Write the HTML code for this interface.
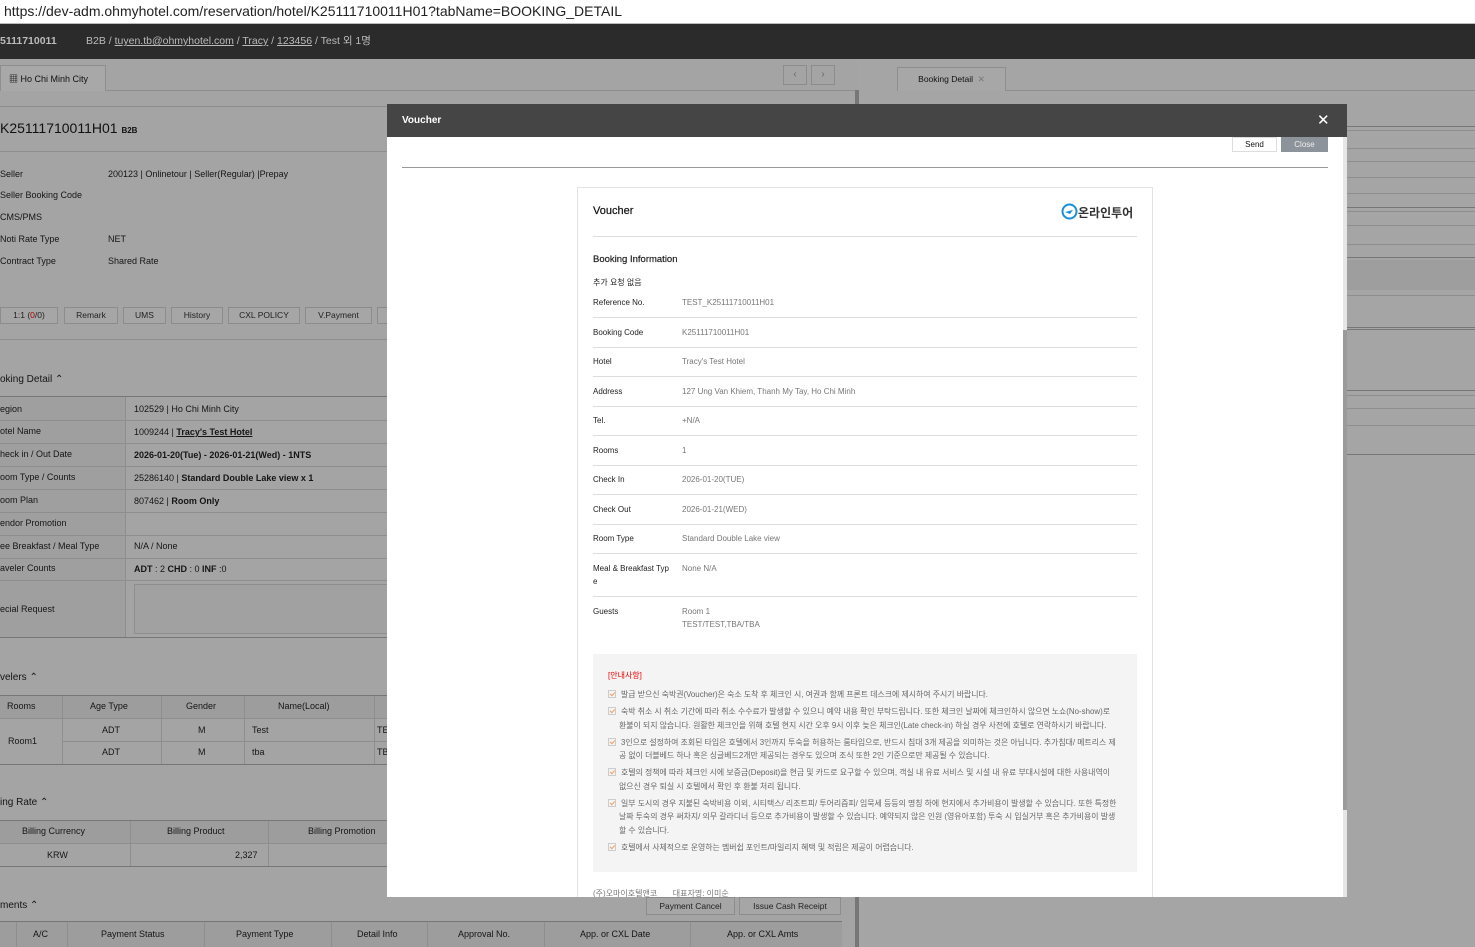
<!DOCTYPE html>
<html><head><meta charset="utf-8"><style>
*{margin:0;padding:0;box-sizing:border-box}
body{width:1475px;height:947px;overflow:hidden;background:#a5a5a5;font-family:"Liberation Sans","Noto Sans CJK KR",sans-serif;position:relative;color:#111}
.a{position:absolute}
.url{left:0;top:0;width:1475px;height:24px;background:#fff;border-bottom:1px solid #bbb;font-size:14px;color:#222;padding:1px 4px;line-height:20px}
.top{left:0;top:24px;width:1475px;height:35px;background:#2b2b2b;color:#bbb;font-size:10.5px;line-height:35px}
.top u{color:#bbb}
.t{font-size:9px;color:#151515;white-space:nowrap}
.hl{height:1px;background:#777}
.hl2{height:1px;background:#8e8e8e}
.btn{border:1px solid #8c8c8c;height:17px;font-size:8.5px;line-height:15px;text-align:center;color:#222;background:#a6a6a6}
.vl{width:1px;background:#8e8e8e}
.cell{font-size:9px;color:#151515;position:absolute;white-space:nowrap}
.m{left:387px;top:104px;width:960px;height:793px;background:#fff;overflow:hidden}
.v{font-size:8px;color:#222;white-space:nowrap}
.vv{font-size:8px;color:#777;white-space:nowrap}
.rl{height:1px;background:#ddd;left:593px;width:544px}
.n{font-size:7.9px;color:#666;line-height:13.6px;white-space:nowrap;margin-bottom:3.4px}
.ck{display:inline-block;width:8px;height:8px;border:1px solid #ccc;margin-right:5px;position:relative;top:1px}
.ck:after{content:"";position:absolute;left:2px;top:0px;width:2px;height:4px;border:solid #f0a060;border-width:0 1px 1px 0;transform:rotate(45deg)}
</style></head><body>
<div class="a url">https://dev-adm.ohmyhotel.com/reservation/hotel/K25111710011H01?tabName=BOOKING_DETAIL</div>
<div class="a top"><span class="a" style="left:0;font-weight:bold;color:#bbb">5111710011</span><span class="a" style="left:86px">B2B / <u>tuyen.tb@ohmyhotel.com</u> / <u>Tracy</u> / <u>123456</u> / Test 외 1명</span></div>

<div class="a" style="left:0;top:59px;width:858px;height:888px;background:#a4a4a4"></div>
<div class="a" style="left:0;top:65px;width:106px;height:26px;border:1px solid #8e8e8e;border-bottom:none;background:#a8a8a8;font-size:9px;line-height:26px;padding-left:8px">▦ Ho Chi Minh City</div>
<div class="a hl2" style="left:106px;top:90px;width:752px"></div>
<div class="a" style="left:783px;top:65px;width:24px;height:20px;border:1px solid #8c8c8c;font-size:10px;text-align:center;line-height:18px;color:#666">‹</div>
<div class="a" style="left:811px;top:65px;width:24px;height:20px;border:1px solid #8c8c8c;font-size:10px;text-align:center;line-height:18px;color:#666">›</div>
<div class="a" style="left:855px;top:90px;width:4px;height:857px;background:#777"></div>
<div class="a hl2" style="left:0;top:106px;width:858px"></div>
<div class="a" style="left:0;top:120px;font-size:14px;color:#111">K25111710011H01 <span style="font-size:8px;font-weight:bold">B2B</span></div>
<div class="a hl2" style="left:0;top:151px;width:858px"></div>
<div class="a t" style="left:0;top:169px">Seller</div><div class="a t" style="left:108px;top:169px">200123 | Onlinetour | Seller(Regular) |Prepay</div>
<div class="a t" style="left:0;top:190px">Seller Booking Code</div>
<div class="a t" style="left:0;top:212px">CMS/PMS</div>
<div class="a t" style="left:0;top:234px">Noti Rate Type</div><div class="a t" style="left:108px;top:234px">NET</div>
<div class="a t" style="left:0;top:256px">Contract Type</div><div class="a t" style="left:108px;top:256px">Shared Rate</div>
<div class="a btn" style="left:0;top:307px;width:58px">1:1 (<span style="color:#a00">0</span>/0)</div>
<div class="a btn" style="left:64px;top:307px;width:54px">Remark</div>
<div class="a btn" style="left:123px;top:307px;width:43px">UMS</div>
<div class="a btn" style="left:171px;top:307px;width:52px">History</div>
<div class="a btn" style="left:228px;top:307px;width:72px">CXL POLICY</div>
<div class="a btn" style="left:305px;top:307px;width:67px">V.Payment</div>
<div class="a btn" style="left:377px;top:307px;width:20px"></div>
<div class="a hl2" style="left:0;top:339px;width:858px"></div>
<div class="a t" style="left:0;top:374px;font-size:10px">oking Detail ⌃</div>
<div class="a hl" style="left:0;top:396px;width:858px"></div>
<div class="a" style="left:0;top:397px;width:125px;height:240px;background:#9f9f9f"></div>
<div class="a vl" style="left:125px;top:397px;height:240px"></div>
<div class="a t" style="left:0;top:404px">egion</div><div class="a t" style="left:134px;top:404px">102529 | Ho Chi Minh City</div>
<div class="a hl2" style="left:0;top:420px;width:858px"></div>
<div class="a t" style="left:0;top:426px">otel Name</div><div class="a t" style="left:134px;top:427px">1009244 | <b><u>Tracy's Test Hotel</u></b></div>
<div class="a hl2" style="left:0;top:443px;width:858px"></div>
<div class="a t" style="left:0;top:449px">heck in / Out Date</div><div class="a t" style="left:134px;top:450px"><b>2026-01-20(Tue) - 2026-01-21(Wed) - 1NTS</b></div>
<div class="a hl2" style="left:0;top:466px;width:858px"></div>
<div class="a t" style="left:0;top:472px">oom Type / Counts</div><div class="a t" style="left:134px;top:473px">25286140 | <b>Standard Double Lake view x 1</b></div>
<div class="a hl2" style="left:0;top:489px;width:858px"></div>
<div class="a t" style="left:0;top:495px">oom Plan</div><div class="a t" style="left:134px;top:496px">807462 | <b>Room Only</b></div>
<div class="a hl2" style="left:0;top:512px;width:858px"></div>
<div class="a t" style="left:0;top:518px">endor Promotion</div>
<div class="a hl2" style="left:0;top:535px;width:858px"></div>
<div class="a t" style="left:0;top:541px">ee Breakfast / Meal Type</div><div class="a t" style="left:134px;top:541px">N/A / None</div>
<div class="a hl2" style="left:0;top:558px;width:858px"></div>
<div class="a t" style="left:0;top:563px">aveler Counts</div><div class="a t" style="left:134px;top:564px"><b>ADT</b> : 2 <b>CHD</b> : 0 <b>INF</b> :0</div>
<div class="a hl2" style="left:0;top:580px;width:858px"></div>
<div class="a" style="left:134px;top:584px;width:260px;height:50px;border:1px solid #8e8e8e;background:#a1a1a1"></div>
<div class="a t" style="left:0;top:604px">ecial Request</div>
<div class="a hl" style="left:0;top:637px;width:858px"></div>

<div class="a t" style="left:0;top:672px;font-size:10px">velers ⌃</div>
<div class="a hl" style="left:0;top:695px;width:858px"></div>
<div class="a" style="left:0;top:696px;width:858px;height:22px;background:#9d9d9d"></div>
<div class="a hl2" style="left:0;top:718px;width:858px"></div>
<div class="a hl2" style="left:62px;top:741px;width:796px"></div>
<div class="a hl" style="left:0;top:764px;width:858px"></div>
<div class="a vl" style="left:62px;top:696px;height:68px"></div>
<div class="a vl" style="left:161px;top:696px;height:68px"></div>
<div class="a vl" style="left:244px;top:696px;height:68px"></div>
<div class="a vl" style="left:374px;top:696px;height:68px"></div>
<div class="cell" style="left:7px;top:701px">Rooms</div><div class="cell" style="left:90px;top:701px">Age Type</div><div class="cell" style="left:186px;top:701px">Gender</div><div class="cell" style="left:278px;top:701px">Name(Local)</div>
<div class="cell" style="left:8px;top:736px">Room1</div>
<div class="cell" style="left:102px;top:725px">ADT</div><div class="cell" style="left:198px;top:725px">M</div><div class="cell" style="left:252px;top:725px">Test</div><div class="cell" style="left:377px;top:725px">TE</div>
<div class="cell" style="left:102px;top:747px">ADT</div><div class="cell" style="left:198px;top:747px">M</div><div class="cell" style="left:252px;top:747px">tba</div><div class="cell" style="left:377px;top:747px">TB</div>

<div class="a t" style="left:0;top:797px;font-size:10px">ing Rate ⌃</div>
<div class="a hl" style="left:0;top:820px;width:858px"></div>
<div class="a" style="left:0;top:821px;width:858px;height:22px;background:#9d9d9d"></div>
<div class="a hl2" style="left:0;top:843px;width:858px"></div>
<div class="a hl" style="left:0;top:866px;width:858px"></div>
<div class="a vl" style="left:130px;top:821px;height:45px"></div>
<div class="a vl" style="left:268px;top:821px;height:45px"></div>
<div class="cell" style="left:22px;top:826px">Billing Currency</div><div class="cell" style="left:167px;top:826px">Billing Product</div><div class="cell" style="left:308px;top:826px">Billing Promotion</div>
<div class="cell" style="left:47px;top:850px">KRW</div><div class="cell" style="left:235px;top:850px">2,327</div>

<div class="a t" style="left:0;top:900px;font-size:10px">ments ⌃</div>
<div class="a btn" style="left:646px;top:897px;width:89px;height:18px;line-height:16px">Payment Cancel</div>
<div class="a btn" style="left:739px;top:897px;width:102px;height:18px;line-height:16px">Issue Cash Receipt</div>
<div class="a hl" style="left:0;top:921px;width:842px"></div>
<div class="a" style="left:0;top:922px;width:842px;height:25px;background:#9d9d9d"></div>
<div class="a vl" style="left:16px;top:922px;height:25px"></div><div class="a vl" style="left:67px;top:922px;height:25px"></div><div class="a vl" style="left:204px;top:922px;height:25px"></div><div class="a vl" style="left:331px;top:922px;height:25px"></div><div class="a vl" style="left:427px;top:922px;height:25px"></div><div class="a vl" style="left:544px;top:922px;height:25px"></div><div class="a vl" style="left:690px;top:922px;height:25px"></div>
<div class="cell" style="left:33px;top:929px">A/C</div><div class="cell" style="left:101px;top:929px">Payment Status</div><div class="cell" style="left:236px;top:929px">Payment Type</div><div class="cell" style="left:357px;top:929px">Detail Info</div><div class="cell" style="left:458px;top:929px">Approval No.</div><div class="cell" style="left:580px;top:929px">App. or CXL Date</div><div class="cell" style="left:727px;top:929px">App. or CXL Amts</div>

<div class="a" style="left:875px;top:59px;width:600px;height:888px;background:#a5a5a5"></div>
<div class="a" style="left:897px;top:67px;width:109px;height:24px;border:1px solid #8e8e8e;border-bottom:none;font-size:8.5px;line-height:22px;text-align:center;background:#a7a7a7">Booking Detail &nbsp;<span style="color:#777">✕</span></div>
<div class="a hl2" style="left:1006px;top:90px;width:469px"></div>
<div class="a hl" style="left:1347px;top:126px;width:128px"></div>
<div class="a hl2" style="left:1347px;top:130px;width:128px"></div>
<div class="a hl2" style="left:1347px;top:148px;width:128px"></div>
<div class="a hl2" style="left:1347px;top:161px;width:128px"></div>
<div class="a hl2" style="left:1347px;top:177px;width:128px"></div>
<div class="a hl2" style="left:1347px;top:193px;width:128px"></div>
<div class="a hl2" style="left:1347px;top:211px;width:128px"></div>
<div class="a hl2" style="left:1347px;top:225px;width:128px"></div>
<div class="a hl2" style="left:1347px;top:244px;width:128px"></div>
<div class="a hl" style="left:1347px;top:207px;width:128px"></div>
<div class="a hl" style="left:1347px;top:257px;width:128px"></div>
<div class="a hl" style="left:1347px;top:327px;width:128px"></div>
<div class="a" style="left:1347px;top:260px;width:128px;height:30px;background:#9e9e9e"></div>
<div class="a hl2" style="left:1347px;top:295px;width:128px"></div>
<div class="a hl" style="left:1347px;top:329px;width:128px"></div>
<div class="a hl" style="left:1347px;top:390px;width:128px"></div>
<div class="a hl2" style="left:1347px;top:395px;width:128px"></div>
<div class="a hl2" style="left:1347px;top:408px;width:128px"></div>
<div class="a hl2" style="left:1347px;top:425px;width:128px"></div>
<div class="a hl" style="left:1347px;top:454px;width:128px"></div>

<div class="a m">
  <div class="a" style="left:0;top:0;width:960px;height:33px;background:#454545;color:#fff;font-size:10px;font-weight:bold;line-height:33px;padding-left:15px">Voucher<span class="a" style="left:930px;top:0;font-size:15px;font-weight:normal">✕</span></div>
  <div class="a" style="left:956px;top:33px;width:4px;height:760px;background:#e6e6e6"></div>
  <div class="a" style="left:956px;top:226px;width:4px;height:480px;background:#9a9a9a"></div>
</div>
<div class="a" style="left:1232px;top:137px;width:45px;height:15px;border:1px solid #ddd;font-size:8px;text-align:center;line-height:13px;background:#fff">Send</div>
<div class="a" style="left:1281px;top:137px;width:47px;height:15px;background:#8d939a;color:#eee;font-size:8px;text-align:center;line-height:15px">Close</div>
<div class="a" style="left:402px;top:167px;width:926px;height:1px;background:#999"></div>
<div class="a" style="left:577px;top:187px;width:576px;height:710px;border:1px solid #e2e2e2;border-bottom:none"></div>
<div class="a" style="left:593px;top:205px;font-size:11px;color:#111;-webkit-text-stroke:0.2px #111">Voucher</div>
<div class="a" style="left:1061px;top:203px;font-size:12px;font-weight:bold;color:#333;white-space:nowrap"><svg width="17" height="17" viewBox="0 0 17 17" style="vertical-align:-3px"><circle cx="8.5" cy="8.5" r="7" fill="none" stroke="#1a8fd8" stroke-width="2"/><path d="M4 9 L12 7 L9 11 Z" fill="#1a8fd8"/></svg>온라인투어</div>
<div class="a rl" style="top:236px"></div>
<div class="a v" style="left:593px;top:254px;font-size:9.5px;-webkit-text-stroke:0.2px #222">Booking Information</div>
<div class="a v" style="left:593px;top:277px">추가 요청 없음</div>
<div class="a v" style="left:593px;top:298px">Reference No.</div><div class="a vv" style="left:682px;top:298px">TEST_K25111710011H01</div>
<div class="a rl" style="top:317px"></div>
<div class="a v" style="left:593px;top:328px">Booking Code</div><div class="a vv" style="left:682px;top:328px">K25111710011H01</div>
<div class="a rl" style="top:347px"></div>
<div class="a v" style="left:593px;top:357px">Hotel</div><div class="a vv" style="left:682px;top:357px">Tracy's Test Hotel</div>
<div class="a rl" style="top:376px"></div>
<div class="a v" style="left:593px;top:387px">Address</div><div class="a vv" style="left:682px;top:387px">127 Ung Van Khiem, Thanh My Tay, Ho Chi Minh</div>
<div class="a rl" style="top:406px"></div>
<div class="a v" style="left:593px;top:416px">Tel.</div><div class="a vv" style="left:682px;top:416px">+N/A</div>
<div class="a rl" style="top:435px"></div>
<div class="a v" style="left:593px;top:446px">Rooms</div><div class="a vv" style="left:682px;top:446px">1</div>
<div class="a rl" style="top:465px"></div>
<div class="a v" style="left:593px;top:475px">Check In</div><div class="a vv" style="left:682px;top:475px">2026-01-20(TUE)</div>
<div class="a rl" style="top:494px"></div>
<div class="a v" style="left:593px;top:505px">Check Out</div><div class="a vv" style="left:682px;top:505px">2026-01-21(WED)</div>
<div class="a rl" style="top:524px"></div>
<div class="a v" style="left:593px;top:534px">Room Type</div><div class="a vv" style="left:682px;top:534px">Standard Double Lake view</div>
<div class="a rl" style="top:553px"></div>
<div class="a v" style="left:593px;top:564px">Meal &amp; Breakfast Typ</div><div class="a v" style="left:593px;top:577px">e</div><div class="a vv" style="left:682px;top:564px">None N/A</div>
<div class="a rl" style="top:596px"></div>
<div class="a v" style="left:593px;top:607px">Guests</div><div class="a vv" style="left:682px;top:607px">Room 1</div><div class="a vv" style="left:682px;top:620px">TEST/TEST,TBA/TBA</div>
<div class="a" style="left:593px;top:654px;width:544px;height:218px;background:#f4f4f4;padding:16px 0 0 15px">
 <div style="font-size:8px;color:#e00;margin-bottom:7px">[안내사항]</div>
 <div class="n"><span class="ck"></span>발급 받으신 숙박권(Voucher)은 숙소 도착 후 체크인 시, 여권과 함께 프론트 데스크에 제시하여 주시기 바랍니다.</div>
 <div class="n"><span class="ck"></span>숙박 취소 시 취소 기간에 따라 취소 수수료가 발생할 수 있으니 예약 내용 확인 부탁드립니다. 또한 체크인 날짜에 체크인하시 않으면 노쇼(No-show)로<br>&nbsp;&nbsp;&nbsp;&nbsp;&nbsp;환불이 되지 않습니다. 원활한 체크인을 위해 호텔 현지 시간 오후 9시 이후 늦은 체크인(Late check-in) 하실 경우 사전에 호텔로 연락하시기 바랍니다.</div>
 <div class="n"><span class="ck"></span>3인으로 설정하여 조회된 타입은 호텔에서 3인까지 투숙을 허용하는 룸타입으로, 반드시 침대 3개 제공을 의미하는 것은 아닙니다. 추가침대/ 메트리스 제<br>&nbsp;&nbsp;&nbsp;&nbsp;&nbsp;공 없이 더블베드 하나 혹은 싱글베드2개만 제공되는 경우도 있으며 조식 또한 2인 기준으로만 제공될 수 있습니다.</div>
 <div class="n"><span class="ck"></span>호텔의 정책에 따라 체크인 시에 보증금(Deposit)을 현금 및 카드로 요구할 수 있으며, 객실 내 유료 서비스 및 시설 내 유료 부대시설에 대한 사용내역이<br>&nbsp;&nbsp;&nbsp;&nbsp;&nbsp;없으신 경우 퇴실 시 호텔에서 확인 후 환불 처리 됩니다.</div>
 <div class="n"><span class="ck"></span>일부 도시의 경우 지불된 숙박비용 이외, 시티택스/ 리조트피/ 투어리즘피/ 임묵세 등등의 명칭 하에 현지에서 추가비용이 발생할 수 있습니다. 또한 특정한<br>&nbsp;&nbsp;&nbsp;&nbsp;&nbsp;날짜 투숙의 경우 써차지/ 의무 갈라디너 등으로 추가비용이 발생할 수 있습니다. 예약되지 않은 인원 (영유아포함) 투숙 시 입실거부 혹은 추가비용이 발생<br>&nbsp;&nbsp;&nbsp;&nbsp;&nbsp;할 수 있습니다.</div>
 <div class="n"><span class="ck"></span>호텔에서 사체적으로 운영하는 멤버쉽 포인트/마일리지 혜택 및 적립은 제공이 어렵습니다.</div>
</div>
<div class="a" style="left:593px;top:888px;font-size:8px;color:#777;white-space:nowrap;height:9px;overflow:hidden">(주)오마이호텔앤코 &nbsp;&nbsp;&nbsp;&nbsp;&nbsp; 대표자명: 이미순</div>
</body></html>
